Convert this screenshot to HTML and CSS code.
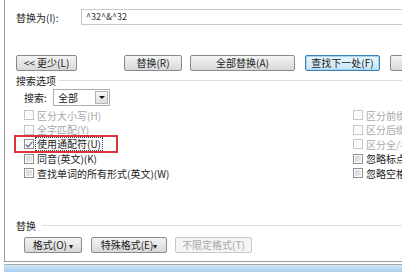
FILE: index.html
```html
<!DOCTYPE html>
<html lang="zh-CN">
<head>
  <meta charset="UTF-8">
  <title>查找和替换</title>
  <link rel="stylesheet" href="styles.css">
</head>
<body>
  <div class="dialog">
    <div class="field-row">
      <label class="field-label">替换为(I):</label>
      <div class="text-box">^32^&amp;^32</div>
    </div>

    <div class="btn-row">
      <button class="btn btn-less">&lt;&lt; 更少(L)</button>
      <button class="btn btn-replace">替换(R)</button>
      <button class="btn btn-all">全部替换(A)</button>
      <button class="btn btn-next default">查找下一处(F)</button>
      <button class="btn btn-cancel">取消</button>
    </div>

    <div class="group-title"><span>搜索选项</span></div>

    <div class="search-row">
      <label class="search-label">搜索:</label>
      <div class="select">全部<span class="arrow"></span></div>
    </div>

    <div class="options">
      <div class="col-left">
        <div class="check disabled"><span class="box"></span>区分大小写(H)</div>
        <div class="check disabled"><span class="box"></span>全字匹配(Y)</div>
        <div class="check marked"><span class="box checked"></span><span class="focus">使用通配符(U)</span><span class="mark"></span></div>
        <div class="check"><span class="box"></span>同音(英文)(K)</div>
        <div class="check"><span class="box"></span>查找单词的所有形式(英文)(W)</div>
      </div>
      <div class="col-right">
        <div class="check disabled"><span class="box"></span>区分前缀(X)</div>
        <div class="check disabled"><span class="box"></span>区分后缀(T)</div>
        <div class="check disabled"><span class="box"></span>区分全/半角(M)</div>
        <div class="check"><span class="box"></span>忽略标点符号(S)</div>
        <div class="check"><span class="box"></span>忽略空格(W)</div>
      </div>
    </div>

    <div class="group-title replace-title"><span>替换</span></div>

    <div class="btn-row bottom-row">
      <button class="btn btn-format">格式(O) <span class="drop">▾</span></button>
      <button class="btn btn-special">特殊格式(E)<span class="drop">▾</span></button>
      <button class="btn btn-noformat" disabled>不限定格式(T)</button>
    </div>
  </div>
  <div class="taskbar"></div>
</body>
</html>
```

FILE: styles.css
```css
body {
  margin: 0;
  background-color: #fff;
  font-family: "Noto Sans CJK SC", "Liberation Sans", sans-serif;
  font-size: 10px;
  color: #222;
  overflow: hidden;
}
.dialog {
  box-sizing: border-box;
  width: 398px;
  height: 262px;
  margin-left: 4px;
  padding: 9px 0 0 11px;
  border-left: 1px solid #9a9a9a;
  border-bottom: 1px solid #9a9a9a;
  overflow: hidden;
}
.field-row {
  display: flex;
  align-items: center;
  height: 16px;
}
.field-label {
  width: 65px;
}
.text-box {
  box-sizing: border-box;
  flex: 1;
  height: 16px;
  line-height: 14px;
  padding-left: 4px;
  border: 1px solid #c8c8c8;
  border-right: none;
  font-size: 9px;
  color: #333;
}
.btn-row {
  display: flex;
  margin-top: 30px;
  height: 16px;
  white-space: nowrap;
}
.btn {
  box-sizing: border-box;
  flex: none;
  height: 16px;
  padding: 0;
  border: 1px solid #8a8a8a;
  border-radius: 2px;
  background: linear-gradient(#f4f4f4, #e6e6e6 50%, #d8d8d8);
  font-family: inherit;
  font-size: 10px;
  line-height: 14px;
  color: #222;
}
.btn.default {
  border-color: #3c7fb1;
  background: linear-gradient(#eef7fd, #d9eefb 50%, #c4e3f7);
  box-shadow: inset 0 0 0 1px #a6d4f2;
}
.btn-less { width: 61px; }
.btn-replace { width: 58px; margin-left: 47px; }
.btn-all { width: 105px; margin-left: 8px; }
.btn-next { width: 75px; margin-left: 10px; }
.btn-cancel { width: 60px; margin-left: 10px; }
.group-title {
  display: flex;
  align-items: center;
  height: 12px;
  margin-top: 3px;
}
.group-title::after {
  content: "";
  flex: 1;
  margin-left: 3px;
  border-top: 1px solid #dcdcdc;
}
.search-row {
  display: flex;
  align-items: center;
  margin-top: 3px;
  padding-left: 8px;
  height: 17px;
}
.search-label {
  width: 29px;
}
.select {
  box-sizing: border-box;
  display: flex;
  align-items: center;
  width: 57px;
  height: 17px;
  padding-left: 4px;
  border: 1px solid #abadb3;
}
.arrow {
  box-sizing: border-box;
  position: relative;
  width: 13px;
  height: 13px;
  margin-left: auto;
  margin-right: 1px;
  border: 1px solid #b5b5b5;
  background: linear-gradient(#f7f7f7, #dedede);
}
.arrow::after {
  content: "";
  position: absolute;
  left: 3px;
  top: 4px;
  border-left: 3px solid transparent;
  border-right: 3px solid transparent;
  border-top: 3px solid #111;
}
.options {
  display: grid;
  grid-template-columns: 1fr 49px;
  margin-top: 2px;
}
.col-left {
  padding-left: 8px;
}
.col-right {
  overflow: hidden;
  white-space: nowrap;
}
.check {
  display: flex;
  align-items: center;
  height: 14.5px;
  white-space: nowrap;
}
.check.disabled {
  color: #a8a8a8;
}
.box {
  box-sizing: border-box;
  flex: none;
  width: 10px;
  height: 10px;
  margin-right: 3px;
  border: 1px solid #8f8f8f;
  background: linear-gradient(135deg, #d0d0d0, #f0f0f0);
  box-shadow: inset 0 0 0 1px #fff;
}
.check.disabled .box {
  border-color: #c4c4c4;
  background: #fafafa;
}
.box.checked {
  position: relative;
  background: #f6f6f6;
}
.box.checked::after {
  content: "";
  position: absolute;
  left: 2px;
  top: 0;
  width: 3px;
  height: 6px;
  border-right: 1.5px solid #3a4f86;
  border-bottom: 1.5px solid #3a4f86;
  transform: rotate(40deg);
}
.check.marked {
  position: relative;
}
.focus {
  padding: 0 1px;
  margin-left: -1px;
  outline: 1px dotted #444;
  line-height: 12px;
}
.mark {
  position: absolute;
  left: -10px;
  top: -2px;
  width: 104px;
  height: 18px;
  box-sizing: border-box;
  border: 2px solid #d8343c;
}
.replace-title {
  margin-top: 38.5px;
}
.replace-title::after {
  margin-left: 6px;
}
.bottom-row {
  margin-top: 6px;
  padding-left: 8px;
}
.btn-format { width: 58px; }
.btn-special { width: 76px; margin-left: 9px; }
.btn-noformat {
  width: 77px;
  margin-left: 8px;
  border-color: #c8c8c8;
  background: #f4f4f4;
  color: #a8a8a8;
}
.drop {
  font-size: 8px;
}
.taskbar {
  box-sizing: border-box;
  width: 398px;
  height: 8px;
  margin: 2px 0 0 4px;
  border-top: 1px solid #a8a8a8;
  background: linear-gradient(#cfe4f6, #a9cdee);
}
```
